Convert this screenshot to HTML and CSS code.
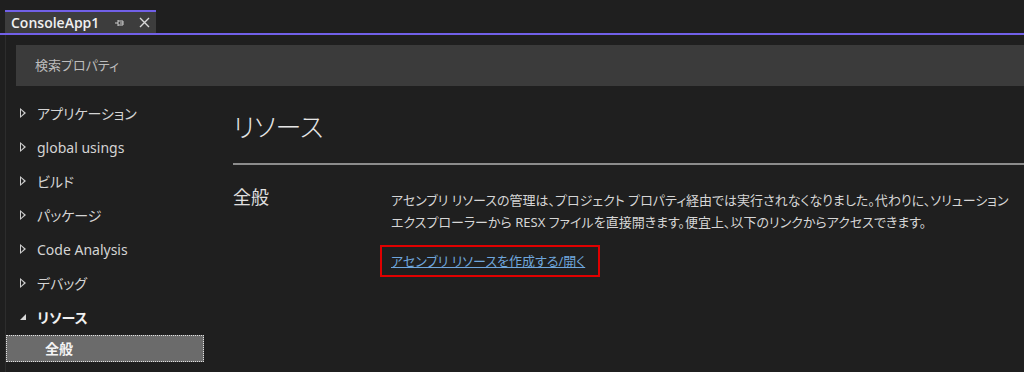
FILE: index.html
```html
<!DOCTYPE html>
<html lang="ja">
<head>
    <meta charset="UTF-8">
    <title>ConsoleApp1</title>
    <link rel="stylesheet" href="styles.css">
</head>
<body>
    <div class="tabbar">
        <div class="tab">
            <span class="tab-title">ConsoleApp1</span>
            <svg class="pin" width="10" height="8" viewBox="0 0 10 8">
                <path d="M0 4h3M3 1v6M3 2h5v4H3M5 4h3" stroke="#cfcfcf" stroke-width="1" fill="none"/>
            </svg>
            <svg class="close" width="11" height="11" viewBox="0 0 11 11">
                <path d="M1 1L10 10M10 1L1 10" stroke="#d8d8d8" stroke-width="1.4"/>
            </svg>
        </div>
    </div>
    <div class="page">
        <div class="search">検索プロパティ</div>
        <div class="columns">
            <!-- left tree -->
            <div class="nav">
                <div class="nav-item"><span class="arrow"></span>アプリケーション</div>
                <div class="nav-item"><span class="arrow"></span>global usings</div>
                <div class="nav-item"><span class="arrow"></span>ビルド</div>
                <div class="nav-item"><span class="arrow"></span>パッケージ</div>
                <div class="nav-item"><span class="arrow"></span>Code Analysis</div>
                <div class="nav-item"><span class="arrow"></span>デバッグ</div>
                <div class="nav-item open"><span class="arrow-down"></span>リソース</div>
                <div class="nav-sub">全般</div>
            </div>
            <!-- content -->
            <div class="content">
                <h1>リソース</h1>
                <div class="section">
                    <h2>全般</h2>
                    <div class="section-body">
                        <p>アセンブリ リソースの管理は、プロジェクト プロパティ経由では実行されなくなりました。代わりに、ソリューション エクスプローラーから RESX ファイルを直接開きます。便宜上、以下のリンクからアクセスできます。</p>
                        <div class="link-box"><a href="#">アセンブリ リソースを作成する/開く</a></div>
                    </div>
                </div>
            </div>
        </div>
    </div>
</body>
</html>
```

FILE: styles.css
```css
body {
    margin: 0;
    background: #1f1f1f;
    color: #d6d6d6;
    font-family: "Segoe UI", "Noto Sans", "Noto Sans CJK JP", sans-serif;
    font-feature-settings: "palt";
    height: 372px;
    overflow: hidden;
}
.tabbar {
    height: 33px;
    padding-left: 5px;
    display: flex;
    align-items: flex-end;
    border-bottom: 2px solid #7160e8;
}
.tab {
    width: 151px;
    height: 23px;
    background: #3d3d3d;
    border-top: 2px solid #7160e8;
    display: flex;
    align-items: center;
    padding-left: 6px;
    box-sizing: border-box;
}
.tab-title {
    font-family: "Open Sans", "Noto Sans", sans-serif;
    font-size: 14px;
    font-weight: 600;
    color: #f0f0f0;
}
.pin {
    margin-left: 16px;
}
.close {
    margin-left: 14px;
}
.page {
    margin-left: 5px;
    border-left: 1px solid #2d2d2d;
    padding-top: 10px;
    height: 330px;
}
.search {
    margin-left: 10px;
    height: 41px;
    background: #3b3b3b;
    color: #bdbdbd;
    font-size: 13px;
    line-height: 41px;
    padding-left: 19px;
}
.columns {
    display: flex;
    margin-top: 10px;
}
.nav {
    width: 198px;
    flex-shrink: 0;
}
.nav-item {
    height: 34px;
    display: flex;
    align-items: center;
    font-size: 14px;
    color: #d4d4d4;
    padding-left: 14px;
}
.arrow {
    width: 0;
    height: 0;
    border-left: 6px solid #d0d0d0;
    border-top: 5px solid transparent;
    border-bottom: 5px solid transparent;
    margin-right: 11px;
    position: relative;
}
.arrow::after {
    content: "";
    position: absolute;
    left: -5px;
    top: -3px;
    border-left: 3px solid #1f1f1f;
    border-top: 3px solid transparent;
    border-bottom: 3px solid transparent;
}
.arrow-down {
    width: 0;
    height: 0;
    border-right: 6px solid #d8d8d8;
    border-top: 6px solid transparent;
    margin-right: 11px;
}
.nav-item.open {
    font-weight: bold;
    color: #f0f0f0;
}
.nav-sub {
    height: 27px;
    line-height: 25px;
    box-sizing: border-box;
    background: #6b6b6b;
    border: 1px dotted #e0e0e0;
    padding-left: 38px;
    font-size: 14px;
    font-weight: bold;
    color: #f4f4f4;
    margin-top: 1px;
}
.content {
    flex: 1;
    padding-left: 29px;
}
h1 {
    margin: 0;
    font-size: 26px;
    font-weight: 300;
    color: #e6e6e6;
    height: 54px;
    padding-top: 13px;
    line-height: 36px;
    border-bottom: 2px solid #8c8c8c;
}
.section {
    display: flex;
    padding-top: 17px;
}
h2 {
    margin: 3px 0 0;
    width: 158px;
    font-size: 18px;
    font-weight: normal;
    color: #e0e0e0;
    line-height: 24px;
}
.section-body {
    width: 630px;
}
p {
    margin: 7px 0 0;
    font-size: 13px;
    line-height: 22px;
}
.link-box {
    display: inline-block;
    margin-top: 12px;
    margin-left: -11px;
    border: 2px solid #e00000;
    padding: 2px 13px 4px 9px;
}
.link-box a {
    color: #6fa6dc;
    font-size: 13px;
}
```
